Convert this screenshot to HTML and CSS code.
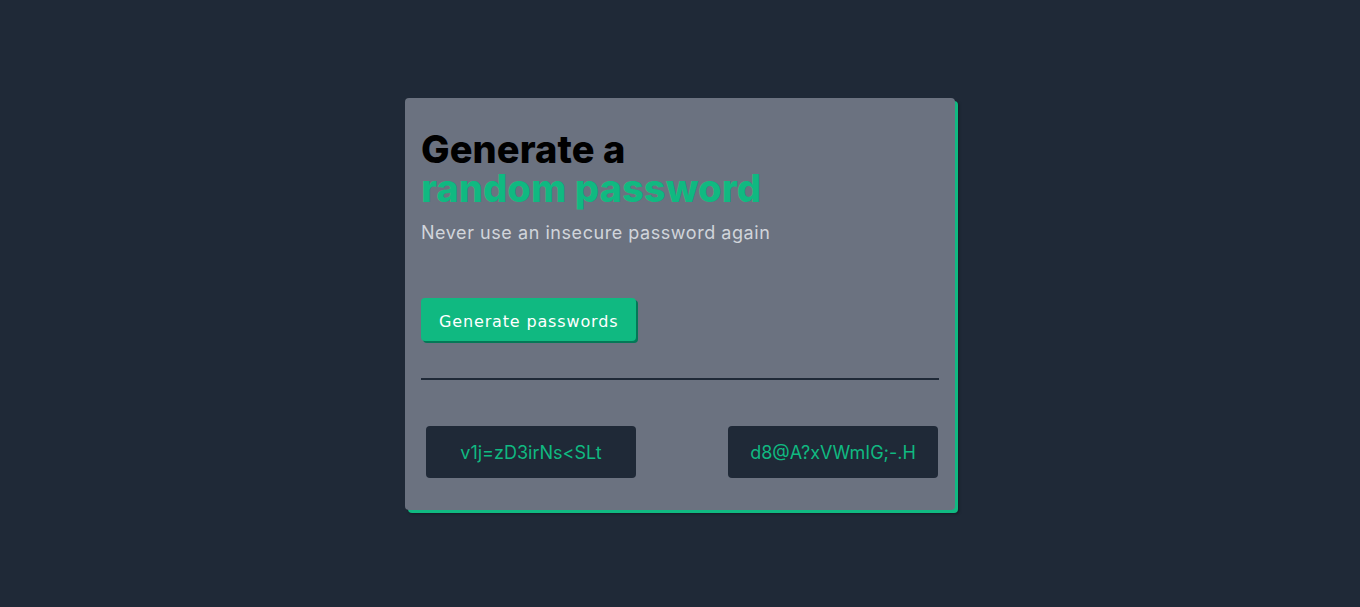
FILE: index.html
```html
<!DOCTYPE html>
<html lang="en">
<head>
<meta charset="utf-8">
<title>Password Generator</title>
<link rel="stylesheet" href="styles.css">
</head>
<body>
<main class="page">
  <section class="card">
    <h1 class="title"><span class="line">Generate a</span><span class="line accent">random password</span></h1>
    <p class="subtitle">Never use an insecure password again</p>
    <button class="generate-btn" type="button">Generate passwords</button>
    <hr class="divider">
    <div class="results">
      <div class="password">v1j=zD3irNs&lt;SLt</div>
      <div class="password">d8@A?xVWmIG;-.H</div>
    </div>
  </section>
</main>
</body>
</html>
```
FILE: styles.css
```css
* { box-sizing: border-box; }
html, body { margin: 0; padding: 0; }
body {
  background: #1F2937;
  font-family: Inter, "Liberation Sans", sans-serif;
  height: 607px;
}
.page {
  height: 100%;
  display: flex;
  align-items: center;
  justify-content: center;
}
.card {
  width: 550px;
  height: 412px;
  background: #6B7280;
  border-radius: 4px;
  padding: 16px;
  box-shadow: 3px 3px 0 #10B981, 4px 4px 3px rgba(0,0,0,0.35);
  display: flex;
  flex-direction: column;
  align-items: flex-start;
}
.title {
  margin: 16px 0 0;
  font-size: 38px;
  line-height: 39px;
  font-weight: 800;
  color: #000;
  letter-spacing: 0.1px;
}
.line { display: block; }
.accent { color: #10B981; }
.subtitle {
  margin: 11px 0 0;
  font-size: 18px;
  line-height: 28px;
  color: #D1D5DB;
  letter-spacing: 0.55px;
}
.generate-btn {
  margin-top: 51px;
  height: 43px;
  padding: 4px 18px 0;
  background: #10B981;
  color: #fff;
  border: none;
  border-radius: 4px;
  font-family: "DejaVu Sans", sans-serif;
  font-size: 16px;
  letter-spacing: 0.85px;
  box-shadow: 2px 2px 0 #047857;
}
.divider {
  width: 100%;
  margin: 37px 0 0;
  border: none;
  height: 2px;
  background: #1F2937;
}
.results {
  width: 100%;
  margin-top: 46px;
  padding: 0 1px 0 5px;
  display: flex;
  justify-content: space-between;
}
.password {
  width: 210px;
  height: 52px;
  padding-top: 2px;
  background: #1F2937;
  border-radius: 4px;
  color: #10B981;
  font-size: 18px;
  display: flex;
  align-items: center;
  justify-content: center;
}
```
